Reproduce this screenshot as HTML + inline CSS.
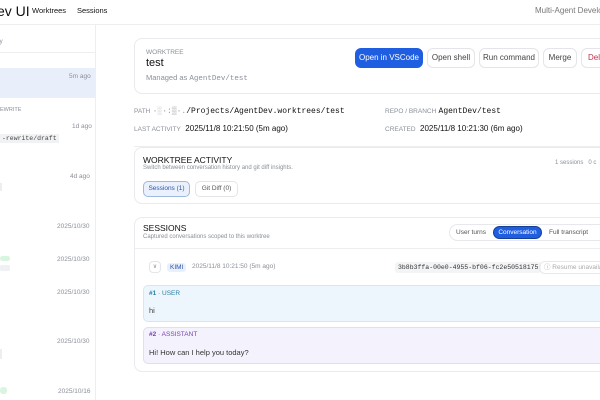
<!DOCTYPE html>
<html><head><style>
*{margin:0;padding:0;box-sizing:border-box}
body{width:600px;height:400px;overflow:hidden;background:#fff;font-family:"Liberation Sans",sans-serif;color:#111;position:relative}
.a{position:absolute;white-space:nowrap}
.mono{font-family:"Liberation Mono",monospace}
.g{color:#8a8f98}
.btn{position:absolute;top:48px;height:20px;border:1px solid #e3e5e8;border-radius:6px;font-size:8px;line-height:18px;text-align:center;color:#444;background:#fff}
.card{position:absolute;border:1px solid #e8eaed;border-radius:8px;background:#fff}
</style></head><body>
<div class="a" style="left:0;top:0;width:600px;height:25px;border-bottom:1px solid #eceef0"></div>
<div class="a" style="left:-3px;top:3px;font-size:14px;color:#111">ev UI</div>
<div class="a" style="left:32px;top:6px;font-size:7.5px">Worktrees</div>
<div class="a" style="left:77px;top:6px;font-size:7.5px">Sessions</div>
<div class="a g" style="left:535px;top:6px;font-size:8px;color:#777">Multi-Agent Develop</div>
<!-- sidebar -->
<div class="a" style="left:95px;top:25px;width:1px;height:375px;background:#eceef0"></div>
<div class="a g" style="left:-2px;top:39px;font-size:6px">ty</div>
<div class="a" style="left:0;top:52px;width:95px;height:1px;background:#eceef0"></div>
<div class="a" style="left:0;top:68px;width:95px;height:30px;background:#e9eefb"></div>
<div class="a g" style="left:69px;top:73px;font-size:6.5px">5m ago</div>
<div class="a g" style="left:0;top:107px;font-size:5.5px">EWRITE</div>
<div class="a g" style="left:72px;top:123px;font-size:6.5px">1d ago</div>
<div class="a mono" style="left:0;top:134px;font-size:6.5px;background:#f1f2f4;padding:1px 2px;color:#444">-rewrite/draft</div>
<div class="a g" style="left:70px;top:173px;font-size:6.5px">4d ago</div>
<div class="a" style="left:0;top:183px;width:2px;height:8px;background:#eee"></div>
<div class="a g" style="left:57px;top:223px;font-size:6.5px">2025/10/30</div>
<div class="a" style="left:0;top:256px;width:10px;height:5px;background:#d8f5df;border-radius:3px"></div>
<div class="a" style="left:0;top:265px;width:10px;height:6px;background:#eef0f3;border-radius:2px"></div>
<div class="a g" style="left:57px;top:256px;font-size:6.5px">2025/10/30</div>
<div class="a g" style="left:57px;top:289px;font-size:6.5px">2025/10/30</div>
<div class="a g" style="left:57px;top:338px;font-size:6.5px">2025/10/30</div>
<div class="a" style="left:0;top:349px;width:2px;height:10px;background:#eee"></div>
<div class="a" style="left:0;top:387px;width:7px;height:7px;background:#d8f5df;border-radius:3px"></div>
<div class="a g" style="left:58px;top:388px;font-size:6.5px">2025/10/16</div>
<!-- worktree card -->
<div class="card" style="left:134px;top:38px;width:480px;height:56px"></div>
<div class="a g" style="left:146px;top:49px;font-size:6.5px">WORKTREE</div>
<div class="a" style="left:146px;top:57px;font-size:11px">test</div>
<div class="a g" style="left:146px;top:73px;font-size:7.5px">Managed as <span class="mono">AgentDev/test</span></div>
<div class="btn" style="left:355px;width:68px;background:#1f5ee0;border-color:#1f5ee0;color:#fff">Open in VSCode</div>
<div class="btn" style="left:427px;width:48px">Open shell</div>
<div class="btn" style="left:479px;width:60px">Run command</div>
<div class="btn" style="left:543px;width:34px">Merge</div>
<div class="btn" style="left:581px;width:40px;color:#c0304a;text-align:left;padding-left:6px">Delete</div>
<div class="a" style="left:134px;top:106px;font-size:8px"><span class="g" style="font-size:6.5px">PATH</span> <span class="mono" style="color:#999">·&#x2591;·:&#x2592;·.</span><span class="mono">/Projects/AgentDev.worktrees/test</span></div>
<div class="a" style="left:134px;top:124px;font-size:8px"><span class="g" style="font-size:6.5px">LAST ACTIVITY</span>&nbsp; 2025/11/8 10:21:50 (5m ago)</div>
<div class="a" style="left:385px;top:106px;font-size:8px"><span class="g" style="font-size:6.5px">REPO / BRANCH</span> <span class="mono">AgentDev/test</span></div>
<div class="a" style="left:385px;top:124px;font-size:8px"><span class="g" style="font-size:6.5px">CREATED</span>&nbsp; 2025/11/8 10:21:30 (6m ago)</div>
<div class="a" style="left:134px;top:146px;width:466px;height:1px;background:#eceef0"></div>
<!-- activity card -->
<div class="card" style="left:134px;top:147px;width:480px;height:57px"></div>
<div class="a" style="left:143px;top:155px;font-size:8.5px">WORKTREE ACTIVITY</div>
<div class="a g" style="left:143px;top:165px;font-size:6px">Switch between conversation history and git diff insights.</div>
<div class="a g" style="left:555px;top:160px;font-size:6px">1 sessions &nbsp; 0 c</div>
<div class="a" style="left:143px;top:181px;width:47px;height:16px;border:1px solid #9fb8e0;background:#eaf1fc;border-radius:5px;font-size:6.5px;line-height:14px;text-align:center;color:#2a56a8">Sessions (1)</div>
<div class="a" style="left:195px;top:181px;width:43px;height:16px;border:1px solid #e3e5e8;border-radius:5px;font-size:6.5px;line-height:14px;text-align:center;color:#555">Git Diff (0)</div>
<!-- sessions card -->
<div class="card" style="left:134px;top:217px;width:480px;height:155px"></div>
<div class="a" style="left:143px;top:223px;font-size:8.5px">SESSIONS</div>
<div class="a g" style="left:143px;top:234px;font-size:6px">Captured conversations scoped to this worktree</div>
<div class="a" style="left:449px;top:224px;width:160px;height:17px;border:1px solid #e6e8eb;border-radius:9px"></div>
<div class="a" style="left:456px;top:229px;font-size:6.5px;color:#555">User turns</div>
<div class="a" style="left:493px;top:226px;width:49px;height:13px;background:#1f5ee0;border:1px solid #163f96;border-radius:7px;font-size:6.5px;line-height:11px;text-align:center;color:#fff">Conversation</div>
<div class="a" style="left:549px;top:229px;font-size:6.5px;color:#555">Full transcript</div>
<div class="a" style="left:135px;top:248px;width:465px;height:1px;background:#eceef0"></div>
<div class="a" style="left:149px;top:261px;width:12px;height:12px;border:1px solid #e3e5e8;border-radius:4px;font-size:6px;line-height:10px;text-align:center;color:#888">&#x2228;</div>
<div class="a" style="left:167px;top:263px;padding:0 3px;background:#eaf0fb;border-radius:3px;font-size:6.5px;line-height:9px;color:#2a56a8">KIMI</div>
<div class="a g" style="left:192px;top:263px;font-size:6.5px">2025/11/8 10:21:50 (5m ago)</div>
<div class="a mono" style="left:395px;top:262px;padding:0 3px;background:#f3f4f6;border-radius:3px;font-size:6.5px;line-height:11px;color:#333">3b8b3ffa-00e0-4955-bf06-fc2e50518175</div>
<div class="a g" style="left:539px;top:261px;width:70px;height:13px;border:1px solid #e6e8eb;border-radius:6px;font-size:6.5px;line-height:11px;padding-left:4px;color:#aaa">&#x24D8; Resume unavaila</div>
<div class="a" style="left:143px;top:285px;width:470px;height:37px;background:#eef6fd;border:1px solid #d6e6f3;border-radius:5px"></div>
<div class="a" style="left:149px;top:290px;font-size:6.5px;color:#2a7fa3"><b>#1</b> · USER</div>
<div class="a" style="left:149px;top:306px;font-size:7.5px;color:#444">hi</div>
<div class="a" style="left:143px;top:327px;width:470px;height:37px;background:#f4f2fc;border:1px solid #e2ddf2;border-radius:5px"></div>
<div class="a" style="left:149px;top:331px;font-size:6.5px;color:#7a3fb0"><b>#2</b> · ASSISTANT</div>
<div class="a" style="left:149px;top:348px;font-size:7.5px;color:#333">Hi! How can I help you today?</div>
</body></html>
